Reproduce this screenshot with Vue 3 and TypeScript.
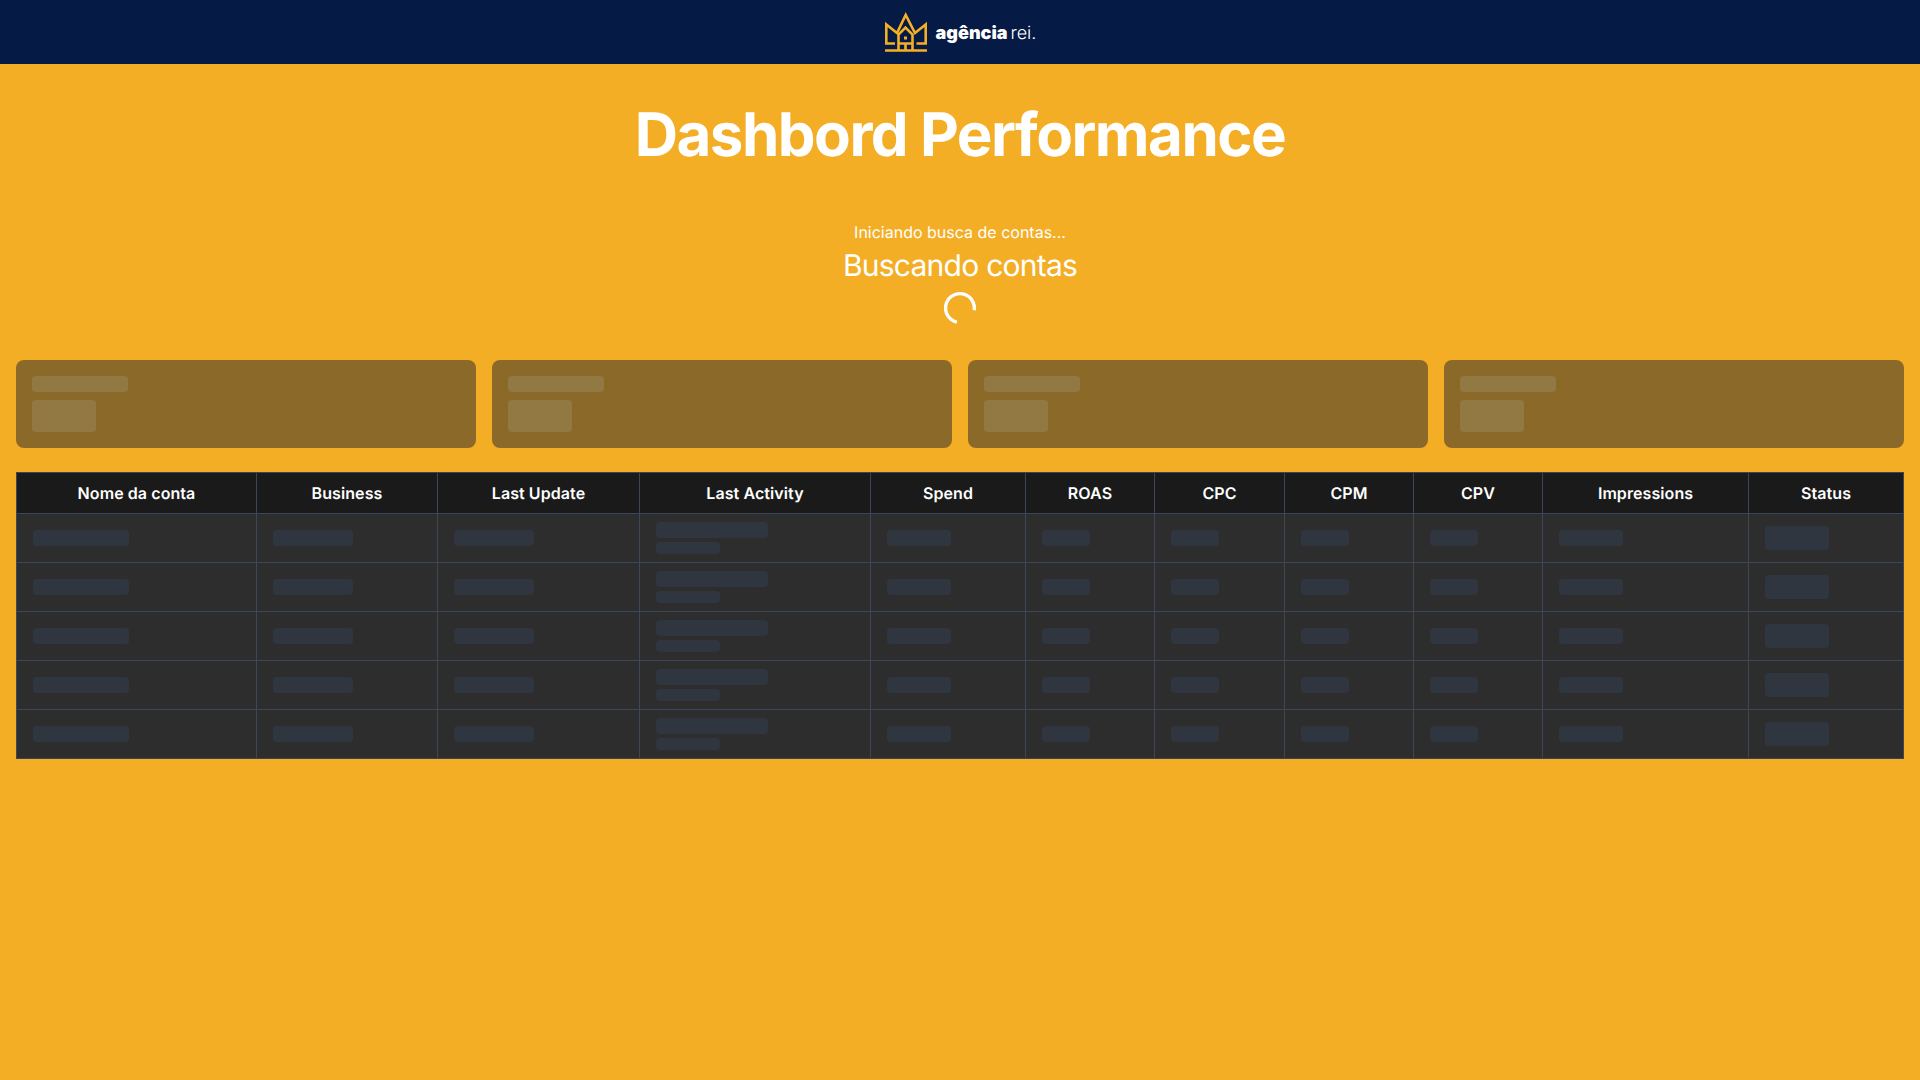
<script setup lang="ts">
interface Bar { w: number; h: number }
interface Col { label: string; width: number; bars: Bar[] }

const cols: Col[] = [
  { label: 'Nome da conta', width: 240, bars: [{ w: 96, h: 16 }] },
  { label: 'Business', width: 181, bars: [{ w: 80, h: 16 }] },
  { label: 'Last Update', width: 202, bars: [{ w: 80, h: 16 }] },
  { label: 'Last Activity', width: 231, bars: [{ w: 112, h: 16 }, { w: 64, h: 12 }] },
  { label: 'Spend', width: 155, bars: [{ w: 64, h: 16 }] },
  { label: 'ROAS', width: 129, bars: [{ w: 48, h: 16 }] },
  { label: 'CPC', width: 130, bars: [{ w: 48, h: 16 }] },
  { label: 'CPM', width: 129, bars: [{ w: 48, h: 16 }] },
  { label: 'CPV', width: 129, bars: [{ w: 48, h: 16 }] },
  { label: 'Impressions', width: 206, bars: [{ w: 64, h: 16 }] },
  { label: 'Status', width: 155, bars: [{ w: 64, h: 24 }] },
]
const rows = [1, 2, 3, 4, 5]
const cards = [1, 2, 3, 4]
</script>

<template>
  <div class="page">
    <header class="nav">
      <div class="logo">
        <svg class="crown" width="44" height="40" viewBox="0 0 44 40" fill="none" stroke="#f5af26" stroke-width="2.6">
          <path d="M11 31.5H2.3V12.5L13 21L21.7 3L31 21L41.7 12.5V31.5H32.5" />
          <path d="M14.5 38V22.5L21.5 15.5L28.5 22.5V38" />
          <path d="M14.5 31.5H28.5M21.5 31.5V38" />
          <path d="M20 26H23" stroke-width="3" />
          <path d="M1 38.5H43" />
        </svg>
        <span class="brand"><b>agência</b><span class="rei">rei.</span></span>
      </div>
    </header>

    <main class="main">
      <h1 class="title">Dashbord Performance</h1>
      <section class="status">
        <p class="status-line">Iniciando busca de contas...</p>
        <p class="status-head">Buscando contas</p>
        <svg class="spinner" width="32" height="32" viewBox="0 0 32 32" fill="none">
          <path d="M30.2 18.3A14.4 14.4 0 1 0 12.9 30.1" stroke="#fff" stroke-width="3.4" />
        </svg>
      </section>

      <section class="cards">
        <div v-for="c in cards" :key="c" class="card">
          <div class="card-bar small"></div>
          <div class="card-bar big"></div>
        </div>
      </section>

      <table class="table">
        <colgroup>
          <col v-for="col in cols" :key="col.label" :style="{ width: col.width + 'px' }" />
        </colgroup>
        <thead>
          <tr>
            <th v-for="col in cols" :key="col.label">{{ col.label }}</th>
          </tr>
        </thead>
        <tbody>
          <tr v-for="r in rows" :key="r">
            <td v-for="col in cols" :key="col.label">
              <div class="cell">
                <div
                  v-for="(bar, i) in col.bars"
                  :key="i"
                  class="bar"
                  :style="{ width: bar.w + 'px', height: bar.h + 'px' }"
                ></div>
              </div>
            </td>
          </tr>
        </tbody>
      </table>
    </main>
  </div>
</template>

<style scoped>
.page {
  min-height: 1080px;
  background: #f4ae25;
  font-family: Inter, "Liberation Sans", sans-serif;
  color: #fff;
  text-rendering: geometricPrecision;
}
.nav {
  height: 64px;
  background: #051a45;
  display: flex;
  align-items: center;
  justify-content: center;
}
.logo {
  display: flex;
  align-items: center;
  gap: 8px;
}
.crown {
  display: block;
}
.brand {
  font-size: 18px;
  line-height: 24px;
  padding-top: 3px;
}
.brand b {
  font-weight: 900;
  letter-spacing: 0;
}
.rei {
  font-weight: 300;
  margin-left: 3px;
}
.main {
  padding: 33px 16px 0;
}
.title {
  margin: 0;
  font-size: 60px;
  line-height: 76px;
  font-weight: 700;
  text-align: center;
  letter-spacing: -1.5px;
}
.status {
  margin-top: 47px;
  display: flex;
  flex-direction: column;
  align-items: center;
}
.status-line {
  margin: 0;
  font-size: 16px;
  line-height: 24px;
}
.status-head {
  margin: 4px 0 0;
  font-size: 30px;
  line-height: 36px;
  font-weight: 400;
  letter-spacing: -0.75px;
}
.spinner {
  margin-top: 8px;
  display: block;
}
.cards {
  margin-top: 36px;
  display: grid;
  grid-template-columns: repeat(4, 1fr);
  gap: 16px;
}
.card {
  height: 88px;
  box-sizing: border-box;
  padding: 16px;
  background: #8b6929;
  border-radius: 8px;
}
.card-bar {
  background: #927842;
  border-radius: 4px;
}
.card-bar.small {
  width: 96px;
  height: 16px;
}
.card-bar.big {
  width: 64px;
  height: 32px;
  margin-top: 8px;
}
.table {
  margin-top: 24px;
  width: 100%;
  table-layout: fixed;
  border-collapse: collapse;
  background: #2d2d2d;
}
th {
  background: #1a1a1a;
  border: 1px solid #3b4659;
  padding: 8px 16px;
  font-size: 16px;
  line-height: 24px;
  font-weight: 600;
  letter-spacing: 0.08px;
  text-align: center;
  color: #fff;
}
td {
  border: 1px solid #3b4659;
  padding: 0 16px;
  height: 48px;
}
.cell {
  display: flex;
  flex-direction: column;
  gap: 4px;
}
.bar {
  background: #30363f;
  border-radius: 4px;
}
</style>
